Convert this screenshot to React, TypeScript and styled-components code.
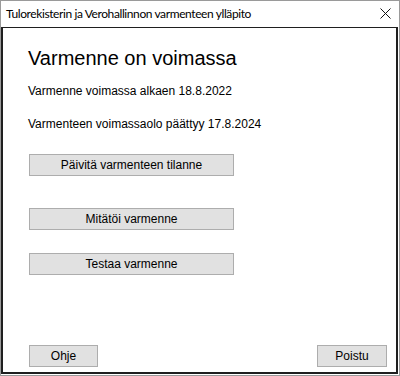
import styled, { createGlobalStyle } from 'styled-components'

const GlobalStyle = createGlobalStyle`
  html, body {
    margin: 0;
    padding: 0;
    background: #ffffff;
  }
  body {
    font-family: "Liberation Sans", Arial, sans-serif;
    color: #000;
  }
`

export default function App() {
  return (
    <>
      <GlobalStyle />
      <Window>
        <TitleBar>
          <Title>Tulorekisterin ja Verohallinnon varmenteen ylläpito</Title>
          <CloseButton aria-label="Sulje">
            <svg width="11" height="11" viewBox="0 0 11 11">
              <path d="M0.5 0.5 L10.5 10.5 M10.5 0.5 L0.5 10.5" stroke="#111" strokeWidth="1" fill="none" />
            </svg>
          </CloseButton>
        </TitleBar>
        <Panel>
          <Heading>Varmenne on voimassa</Heading>
          <Info $top={14}>Varmenne voimassa alkaen 18.8.2022</Info>
          <Info $top={19}>Varmenteen voimassaolo päättyy 17.8.2024</Info>
          <Actions>
            <Button $width={205} $top={0}>Päivitä varmenteen tilanne</Button>
            <Button $width={205} $top={32}>Mitätöi varmenne</Button>
            <Button $width={205} $top={23}>Testaa varmenne</Button>
          </Actions>
          <Footer>
            <Button $width={69}>Ohje</Button>
            <Button $width={70}>Poistu</Button>
          </Footer>
        </Panel>
      </Window>
    </>
  )
}

const Window = styled.div`
  width: 400px;
  height: 376px;
  box-sizing: border-box;
  border: 1px solid #9a9a9a;
  background: #ffffff;
  display: flex;
  flex-direction: column;
`

const TitleBar = styled.div`
  height: 25px;
  flex: none;
  display: flex;
  align-items: center;
  justify-content: space-between;
  padding: 0 8px 0 5px;
`

const Title = styled.span`
  font-family: Lato, "Liberation Sans", sans-serif;
  font-size: 12px;
  letter-spacing: -0.4px;
  color: #000;
`

const CloseButton = styled.span`
  display: flex;
  width: 11px;
  height: 11px;
`

const Panel = styled.div`
  flex: 1;
  margin: 1px 1px 1px 0;
  border: 2px solid #1f1f1f;
  border-top-width: 1px;
  display: flex;
  flex-direction: column;
  padding-left: 25px;
  padding-right: 9px;
  padding-bottom: 5px;
`

const Heading = styled.h1`
  margin: 18px 0 0 0;
  font-size: 20px;
  line-height: 24px;
  font-weight: normal;
`

const Info = styled.p<{ $top: number }>`
  margin: ${(p) => p.$top}px 0 0 0;
  font-size: 12px;
  line-height: 14px;
`

const Actions = styled.div`
  display: flex;
  flex-direction: column;
  align-items: flex-start;
  padding-left: 1px;
  margin-top: 23px;
`

const Button = styled.button<{ $width: number; $top?: number }>`
  width: ${(p) => p.$width}px;
  height: 22px;
  margin-top: ${(p) => p.$top ?? 0}px;
  padding: 0;
  box-sizing: border-box;
  background: #e1e1e1;
  border: 1px solid #adadad;
  font-family: "Liberation Sans", Arial, sans-serif;
  font-size: 12px;
  color: #000;
`

const Footer = styled.div`
  margin-top: auto;
  display: flex;
  justify-content: space-between;
  padding-left: 1px;
`
